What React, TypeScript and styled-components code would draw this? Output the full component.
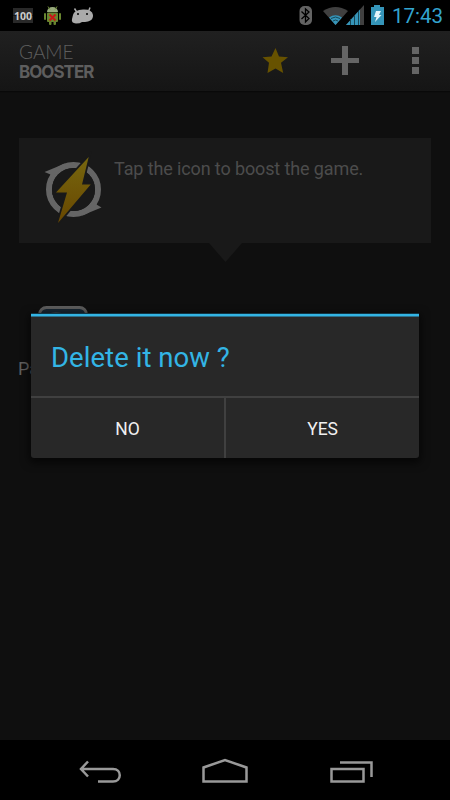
import React from "react";
import styled, { createGlobalStyle } from "styled-components";

const Global = createGlobalStyle`
  * { box-sizing: border-box; }
  html, body { margin: 0; background: #000; }
  body { font-family: Roboto, "Liberation Sans", sans-serif; }
`;

const Screen = styled.div`
  position: relative;
  width: 450px;
  height: 800px;
  overflow: hidden;
  display: flex;
  flex-direction: column;
  background: #0f0f0f;
`;

const StatusBar = styled.header`
  height: 31px;
  flex: none;
  background: #000;
  display: flex;
`;

const Clock = styled.span`
  margin: 4px 0 0 2px;
  font-size: 20.5px;
  font-weight: 400;
  line-height: 24px;
  color: #33a5d0;
  white-space: nowrap;
`;

const ActionBar = styled.nav`
  height: 60px;
  flex: none;
  display: flex;
  align-items: center;
  justify-content: space-between;
  padding-left: 19px;
  background: linear-gradient(#202020, #151515);
  box-shadow: 0 1px 1px #090909;
`;

const Brand = styled.div`
  display: flex;
  flex-direction: column;
  padding-top: 1px;
  color: #5e5e5e;
`;

const BrandLine = styled.span<{ $bold?: boolean }>`
  height: 20px;
  font-family: ${(p) => (p.$bold ? "Inter" : "Lato")}, sans-serif;
  font-size: ${(p) => (p.$bold ? 18 : 19)}px;
  font-weight: ${(p) => (p.$bold ? 700 : 300)};
  letter-spacing: ${(p) => (p.$bold ? -1 : 0)}px;
  line-height: ${(p) => (p.$bold ? 19 : 20)}px;
  white-space: nowrap;
  transform-origin: left;
  transform: ${(p) => (p.$bold ? "scaleX(0.94)" : "none")};
`;

const Body = styled.main`
  flex: 1;
  padding: 47px 19px 0;
`;

const Tip = styled.section`
  height: 105px;
  display: flex;
  background: #191919;
  position: relative;
`;

const TipText = styled.p`
  margin: 20px 0 0 10px;
  font-size: 18px;
  letter-spacing: -0.12px;
  line-height: 22px;
  color: #4c4c4c;
  white-space: nowrap;
`;

const TipArrow = styled.svg`
  position: absolute;
  left: 190px;
  top: 105px;
`;

const GameRow = styled.section`
  margin-top: 62px;
  height: 90px;
  display: flex;
  flex-direction: column;
  color: #5e5e5e;
  font-size: 18px;
`;

const GameName = styled.span`
  margin: 0 0 0 -1px;
  line-height: 22px;
`;

const Dialog = styled.div`
  position: absolute;
  left: 31px;
  top: 313px;
  width: 388px;
  height: 145px;
  display: flex;
  flex-direction: column;
  background: #282828;
  border-top: 1px solid #123543;
  border-radius: 0 0 3px 3px;
  box-shadow: 0 3px 8px 2px rgba(0, 0, 0, 0.6);
`;

const DialogTitle = styled.h1`
  margin: 0;
  height: 82px;
  padding: 0 0 0 20px;
  font-size: 27.5px;
  font-weight: 400;
  letter-spacing: 0.05px;
  line-height: 84px;
  color: #33b5e5;
  white-space: nowrap;
  border-top: 2px solid #33b5e5;
  box-shadow: inset 0 1px #2e708a;
`;

const Buttons = styled.div`
  flex: 1;
  display: grid;
  grid-template-columns: 195px 193px;
  border-top: 2px solid #404040;
`;

const DialogButton = styled.button`
  border: 0;
  padding: 2px 0 0;
  background: transparent;
  font: 400 17.5px/20px Roboto, sans-serif;
  letter-spacing: -0.1px;
  color: #f0f0f0;
  &:first-child { border-right: 2px solid #404040; }
`;

const NavBar = styled.footer`
  height: 60px;
  flex: none;
  background: #000;
`;

const StatusIcons = () => (
  <svg width="390" height="31" viewBox="0 0 390 31">
    <rect x="13" y="8" width="20" height="15" fill="#292929" />
    <path d="M13 15.500h20" stroke="#151515" />
    <text x="14" y="20" fontFamily="Open Sans" fontWeight="700" fontSize="10.500" fill="#ccc" textLength="18" lengthAdjust="spacingAndGlyphs">100</text>
    <g fill="#68852f">
      <path d="M47 12a5.500 5 0 0 1 11 0z" fill="#98aa7c" />
      <path d="M48 6.500l2 3M57 6.500l-2 3" stroke="#72913a" />
      <rect x="47" y="12.500" width="11" height="9.500" rx="1" />
      <rect x="44" y="13" width="2" height="7" rx="1" />
      <rect x="59" y="13" width="2" height="7" rx="1" />
      <rect x="49" y="21" width="2.500" height="4" rx="1" />
      <rect x="53.500" y="21" width="2.500" height="4" rx="1" />
    </g>
    <path d="M49.500 14.500l6 6m0-6l-6 6" stroke="#c91818" strokeWidth="2" />
    <path d="M74.500 8.500l2.500 4M90 7.500l-1.500 4" stroke="#aaa" strokeWidth="1.500" />
    <path d="M73 15Q74 10 83 9.500Q92 9 93 15Q93.500 20 88 21.500Q85 22 82 22Q80 23.500 76 23.500Q71 23 72 19Z" fill="#aaa" />
    <circle cx="78" cy="14" r="1" /><circle cx="87" cy="14" r="1" />
    <rect x="299.500" y="6" width="12.500" height="19" rx="5" fill="#636363" />
    <path d="M301.500 11.500l7.500 7-3.500 3.500V9l3.500 3-7.500 7" fill="none" stroke="#000" strokeWidth="1.300" />
    <path d="M323 11Q335.500 3 348 11L335.500 25Z" fill="#404040" />
    <path d="M329 17.500Q335.500 13 342 17.500L335.500 25Z" fill="#3595b9" />
    <path d="M331 18.500q4.500-3 9 0M333 21q2.500-2 5 0" fill="none" stroke="#174655" />
    <path d="M346 25L364 5v20z" fill="#404040" />
    <path d="M346 25L360 9.500V25z" fill="#3595b9" />
    <path d="M350.500 19v6M354.500 15v10M358.500 11v14" stroke="#174655" />
    <path d="M371 7h3V5h6v2h4v18h-13z" fill="#3595b9" />
    <path d="M376 11h5l-2 4h2.500l-6.500 7 1.500-5H374z" fill="#e4f5fb" />
  </svg>
);

const ActionIcons = () => (
  <svg width="200" height="60" viewBox="250 31 200 60">
    <path d="M275.500 48l3.500 8.500 9 .7-7 5.600 2.200 10.200-7.700-4.500-8 4.500 1.500-10.200-6.500-5.600 9-.7z" fill="#675200" />
    <path d="M342 46h6v12h11v5h-11v12h-6V63h-11v-5h11z" fill="#656565" />
    <path d="M412 47h7v7h-7zM412 57h7v7h-7zM412 67h7v7h-7z" fill="#656565" />
  </svg>
);

const BoostIcon = () => (
  <svg width="85" height="105" viewBox="19 138 85 105">
    <defs><linearGradient id="bolt" x2="0" y2="1"><stop stopColor="#77670f" /><stop offset="1" stopColor="#684700" /></linearGradient></defs>
    <circle cx="73.500" cy="189.500" r="24.500" fill="none" stroke="#656565" strokeWidth="6" />
    <path d="M44.500 172L65 163.500L58 172L49 180L50.500 174.500ZM101.500 207.500L82 215.500L89 207L98 198L96.500 204.500Z" fill="#656565" />
    <circle cx="73.500" cy="189.500" r="21.500" fill="#191919" />
    <path d="M88.700 157L82 184.500h8.700L58 223l9-30.500H56z" fill="url(#bolt)" stroke="#191919" strokeWidth="3.500" paintOrder="stroke" />
  </svg>
);

const GameIcons = () => (
  <svg width="180" height="53" viewBox="19 305 180 53">
    <rect x="39.500" y="307.500" width="47" height="47" rx="7" fill="#182632" stroke="#5c5c5c" strokeWidth="3" />
    <path d="M49 313.500q7-3 14 0" fill="#343c42" />
    <path d="M164 314q6-2 12 0" fill="#35150b" />
  </svg>
);

const NavIcons = () => (
  <svg width="450" height="60" viewBox="0 740 450 60" fill="none" stroke="#999" strokeWidth="2.500">
    <path d="M88 761.500l-7 7.500 7 7.500M81 769h32c9 0 9 12.500 0 12.500H98" />
    <path d="M203.500 781.500v-14l21.500-7.500 21.500 7.500v14z" />
    <path d="M331.500 769h32v12.500h-32zM340 762.500h31.500V777" />
  </svg>
);

export default function App() {
  return (
    <Screen>
      <Global />
      <StatusBar><StatusIcons /><Clock>17:43</Clock></StatusBar>
      <ActionBar>
        <Brand><BrandLine>GAME</BrandLine><BrandLine $bold>BOOSTER</BrandLine></Brand>
        <ActionIcons />
      </ActionBar>
      <Body>
        <Tip>
          <BoostIcon />
          <TipText>Tap the icon to boost the game.</TipText>
          <TipArrow width="34" height="20"><path d="M0 0h33L16.500 19z" fill="#191919" /></TipArrow>
        </Tip>
        <GameRow><GameIcons /><GameName>Pa</GameName></GameRow>
      </Body>
      <NavBar><NavIcons /></NavBar>
      <Dialog role="dialog">
        <DialogTitle>Delete it now ?</DialogTitle>
        <Buttons><DialogButton>NO</DialogButton><DialogButton>YES</DialogButton></Buttons>
      </Dialog>
    </Screen>
  );
}
